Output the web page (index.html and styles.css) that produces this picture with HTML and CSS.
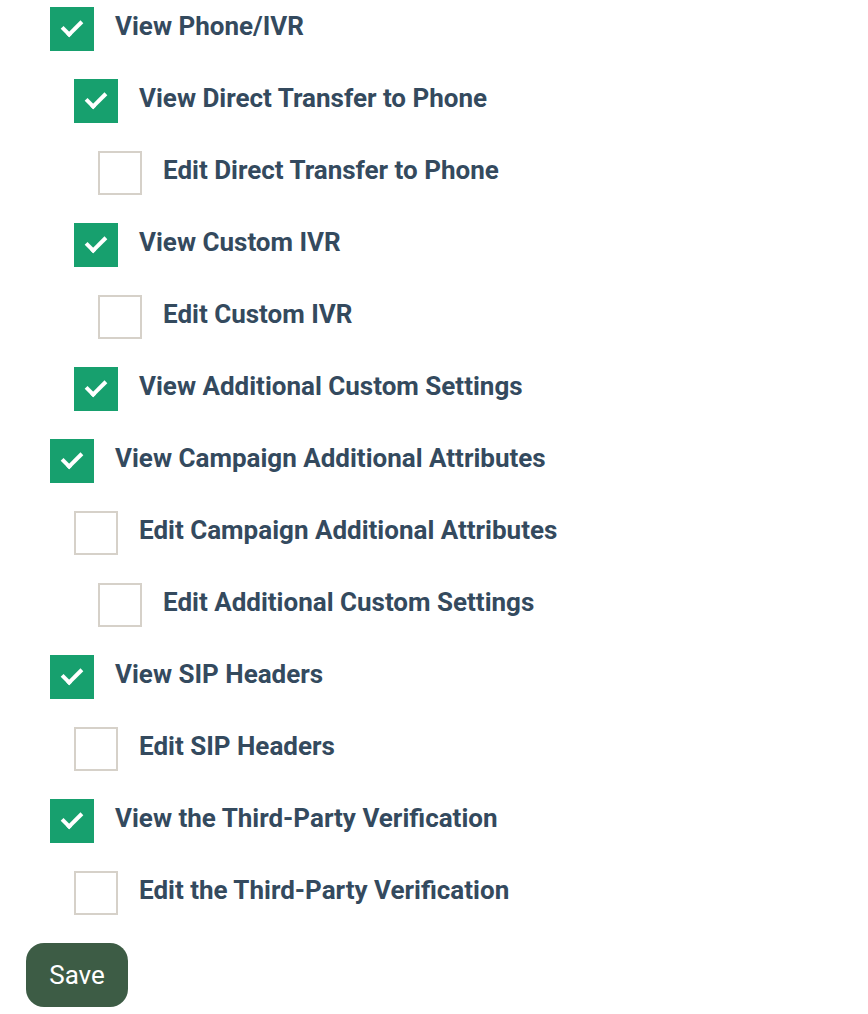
FILE: index.html
```html
<!DOCTYPE html>
<html lang="en">
<head>
  <meta charset="UTF-8">
  <title>Permissions</title>
  <link rel="stylesheet" href="styles.css">
</head>
<body>
<div class="permissions">
  <ul class="perm-list">
    <li>
      <label class="perm"><span class="box checked"></span><span class="name">View Phone/IVR</span></label>
      <ul class="perm-list">
        <li>
          <label class="perm"><span class="box checked"></span><span class="name">View Direct Transfer to Phone</span></label>
          <ul class="perm-list">
            <li><label class="perm"><span class="box"></span><span class="name">Edit Direct Transfer to Phone</span></label></li>
          </ul>
        </li>
        <li>
          <label class="perm"><span class="box checked"></span><span class="name">View Custom IVR</span></label>
          <ul class="perm-list">
            <li><label class="perm"><span class="box"></span><span class="name">Edit Custom IVR</span></label></li>
          </ul>
        </li>
        <li>
          <label class="perm"><span class="box checked"></span><span class="name">View Additional Custom Settings</span></label>
        </li>
      </ul>
    </li>
    <li>
      <label class="perm"><span class="box checked"></span><span class="name">View Campaign Additional Attributes</span></label>
      <ul class="perm-list">
        <li>
          <label class="perm"><span class="box"></span><span class="name">Edit Campaign Additional Attributes</span></label>
          <ul class="perm-list">
            <li><label class="perm"><span class="box"></span><span class="name">Edit Additional Custom Settings</span></label></li>
          </ul>
        </li>
      </ul>
    </li>
    <li>
      <label class="perm"><span class="box checked"></span><span class="name">View SIP Headers</span></label>
      <ul class="perm-list">
        <li><label class="perm"><span class="box"></span><span class="name">Edit SIP Headers</span></label></li>
      </ul>
    </li>
    <li>
      <label class="perm"><span class="box checked"></span><span class="name">View the Third-Party Verification</span></label>
      <ul class="perm-list">
        <li><label class="perm"><span class="box"></span><span class="name">Edit the Third-Party Verification</span></label></li>
      </ul>
    </li>
  </ul>
  <button class="save-btn">Save</button>
</div>
</body>
</html>
```

FILE: styles.css
```css
body {
  margin: 0;
  font-family: Roboto, "Noto Sans", sans-serif;
  background: #ffffff;
}
.permissions {
  padding: 7px 0 0 26px;
}
.perm-list {
  list-style: none;
  margin: 0;
  padding: 0 0 0 24px;
}
.perm-list .perm-list {
  padding-left: 24px;
}
.perm {
  display: flex;
  align-items: center;
  gap: 21px;
  height: 44px;
  margin-bottom: 28px;
  cursor: pointer;
}
.box {
  width: 44px;
  height: 44px;
  box-sizing: border-box;
  border: 2px solid #d6d1c9;
  background: #fff;
  flex-shrink: 0;
  position: relative;
}
.box.checked {
  border: none;
  background: #17a06e;
}
.box.checked::after {
  content: "";
  position: absolute;
  left: 12px;
  top: 13px;
  width: 16px;
  height: 8px;
  border-left: 4px solid #fff;
  border-bottom: 4px solid #fff;
  transform: rotate(-45deg);
}
.name {
  font-size: 26px;
  font-weight: 700;
  color: #344a5e;
  margin-top: -6px;
}
.save-btn {
  width: 102px;
  height: 64px;
  background: #3d5c45;
  color: #fff;
  border: none;
  border-radius: 18px;
  font-family: Roboto, sans-serif;
  font-size: 26px;
  cursor: pointer;
}
```
